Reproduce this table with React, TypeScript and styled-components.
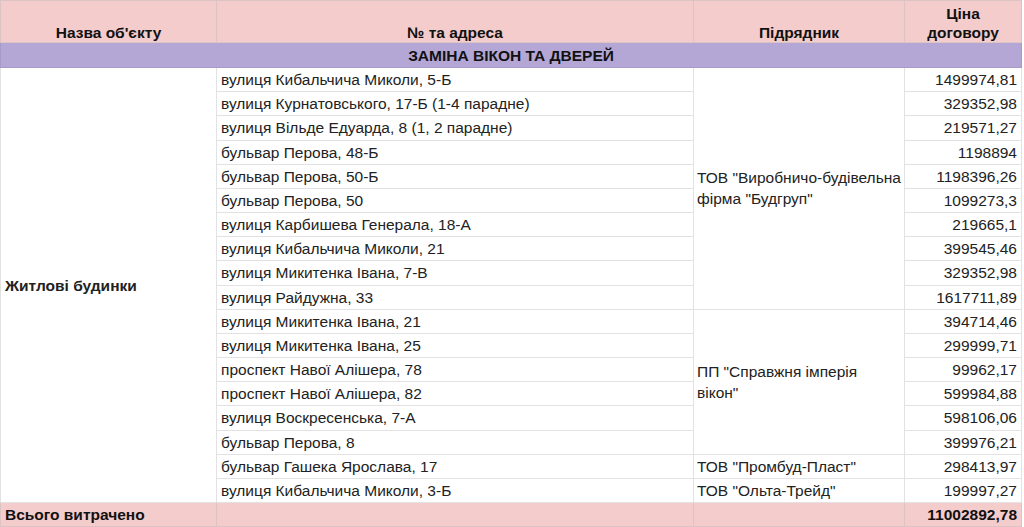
import React from "react"
import styled, { createGlobalStyle } from "styled-components"

const GlobalStyle = createGlobalStyle`
  html, body {
    margin: 0;
    padding: 0;
    background: #fff;
  }
  body {
    font-family: "Liberation Sans", Arial, sans-serif;
    font-size: 15.5px;
    color: #000;
  }
`

type Row = { address: string; price: string }

const rows: Row[] = [
  { address: "вулиця Кибальчича Миколи, 5-Б", price: "1499974,81" },
  { address: "вулиця Курнатовського, 17-Б (1-4 парадне)", price: "329352,98" },
  { address: "вулиця Вільде Едуарда, 8 (1, 2 парадне)", price: "219571,27" },
  { address: "бульвар Перова, 48-Б", price: "1198894" },
  { address: "бульвар Перова, 50-Б", price: "1198396,26" },
  { address: "бульвар Перова, 50", price: "1099273,3" },
  { address: "вулиця Карбишева Генерала, 18-А", price: "219665,1" },
  { address: "вулиця Кибальчича Миколи, 21", price: "399545,46" },
  { address: "вулиця Микитенка Івана, 7-В", price: "329352,98" },
  { address: "вулиця Райдужна, 33", price: "1617711,89" },
  { address: "вулиця Микитенка Івана, 21", price: "394714,46" },
  { address: "вулиця Микитенка Івана, 25", price: "299999,71" },
  { address: "проспект Навої Алішера, 78", price: "99962,17" },
  { address: "проспект Навої Алішера, 82", price: "599984,88" },
  { address: "вулиця Воскресенська, 7-А", price: "598106,06" },
  { address: "бульвар Перова, 8", price: "399976,21" },
  { address: "бульвар Гашека Ярослава, 17", price: "298413,97" },
  { address: "вулиця Кибальчича Миколи, 3-Б", price: "199997,27" },
]

// contractor cells, keyed by the row where they start
const contractors: Record<number, { name: React.ReactNode; span: number }> = {
  0: { name: <>ТОВ "Виробничо-будівельна<br />фірма "Будгруп"</>, span: 10 },
  10: { name: <>ПП "Справжня імперія<br />вікон"</>, span: 6 },
  16: { name: 'ТОВ "Промбуд-Пласт"', span: 1 },
  17: { name: 'ТОВ "Ольта-Трейд"', span: 1 },
}

const Sheet = styled.table`
  border-collapse: collapse;
  table-layout: fixed;
  width: 1021px;
  font-family: "Liberation Sans", Arial, sans-serif;
  font-size: 15.5px;
  line-height: 17px;
`

const HeadRow = styled.tr`
  height: 42px;
  background: #f4cccc;
`

const HeadCell = styled.th<{ $align?: string }>`
  border: 1px solid #dcc4c4;
  font-weight: bold;
  text-align: ${(p) => p.$align || "center"};
  vertical-align: bottom;
  padding: 0 4px 0;
  line-height: 19px;
  color: #111;
`

const SectionRow = styled.tr`
  height: 25px;
  background: #b4a7d6;
`

const SectionCell = styled.td`
  border: 1px solid #a69ac6;
  text-align: center;
  font-weight: bold;
  padding: 0 4px;
  color: #111;
`

const DataRow = styled.tr`
  height: 24.18px;
`

const Cell = styled.td<{ $align?: string; $bold?: boolean }>`
  border: 1px solid #e2e2e2;
  padding: 0 4px;
  text-align: ${(p) => p.$align || "left"};
  font-weight: ${(p) => (p.$bold ? "bold" : "normal")};
  vertical-align: middle;
  color: #222;
  white-space: nowrap;
  overflow: hidden;
`

const MultiCell = styled(Cell)`
  padding: 0 2px 0 3px;
  line-height: 21px;
`

const TotalRow = styled.tr`
  height: 24px;
  background: #f4cccc;
`

const TotalCell = styled.td<{ $align?: string }>`
  border: 1px solid #dcc4c4;
  padding: 0 4px;
  font-weight: bold;
  text-align: ${(p) => p.$align || "left"};
  color: #111;
`

export default function App() {
  return (
    <>
      <GlobalStyle />
      <Sheet>
        <colgroup>
          <col style={{ width: 216 }} />
          <col style={{ width: 477 }} />
          <col style={{ width: 211 }} />
          <col style={{ width: 117 }} />
        </colgroup>
        <thead>
          <HeadRow>
            <HeadCell>Назва об'єкту</HeadCell>
            <HeadCell>№ та адреса</HeadCell>
            <HeadCell>Підрядник</HeadCell>
            <HeadCell>
              Ціна
              <br />
              договору
            </HeadCell>
          </HeadRow>
        </thead>
        <tbody>
          <SectionRow>
            <SectionCell colSpan={4}>ЗАМІНА ВІКОН ТА ДВЕРЕЙ</SectionCell>
          </SectionRow>
          {rows.map((r, i) => {
            const c = contractors[i]
            return (
              <DataRow key={i}>
                {i === 0 && (
                  <Cell rowSpan={rows.length} $bold>
                    Житлові будинки
                  </Cell>
                )}
                <Cell>{r.address}</Cell>
                {c && (
                  <MultiCell rowSpan={c.span}>{c.name}</MultiCell>
                )}
                <Cell $align="right">{r.price}</Cell>
              </DataRow>
            )
          })}
          <TotalRow>
            <TotalCell>Всього витрачено</TotalCell>
            <TotalCell />
            <TotalCell />
            <TotalCell $align="right">11002892,78</TotalCell>
          </TotalRow>
        </tbody>
      </Sheet>
    </>
  )
}
